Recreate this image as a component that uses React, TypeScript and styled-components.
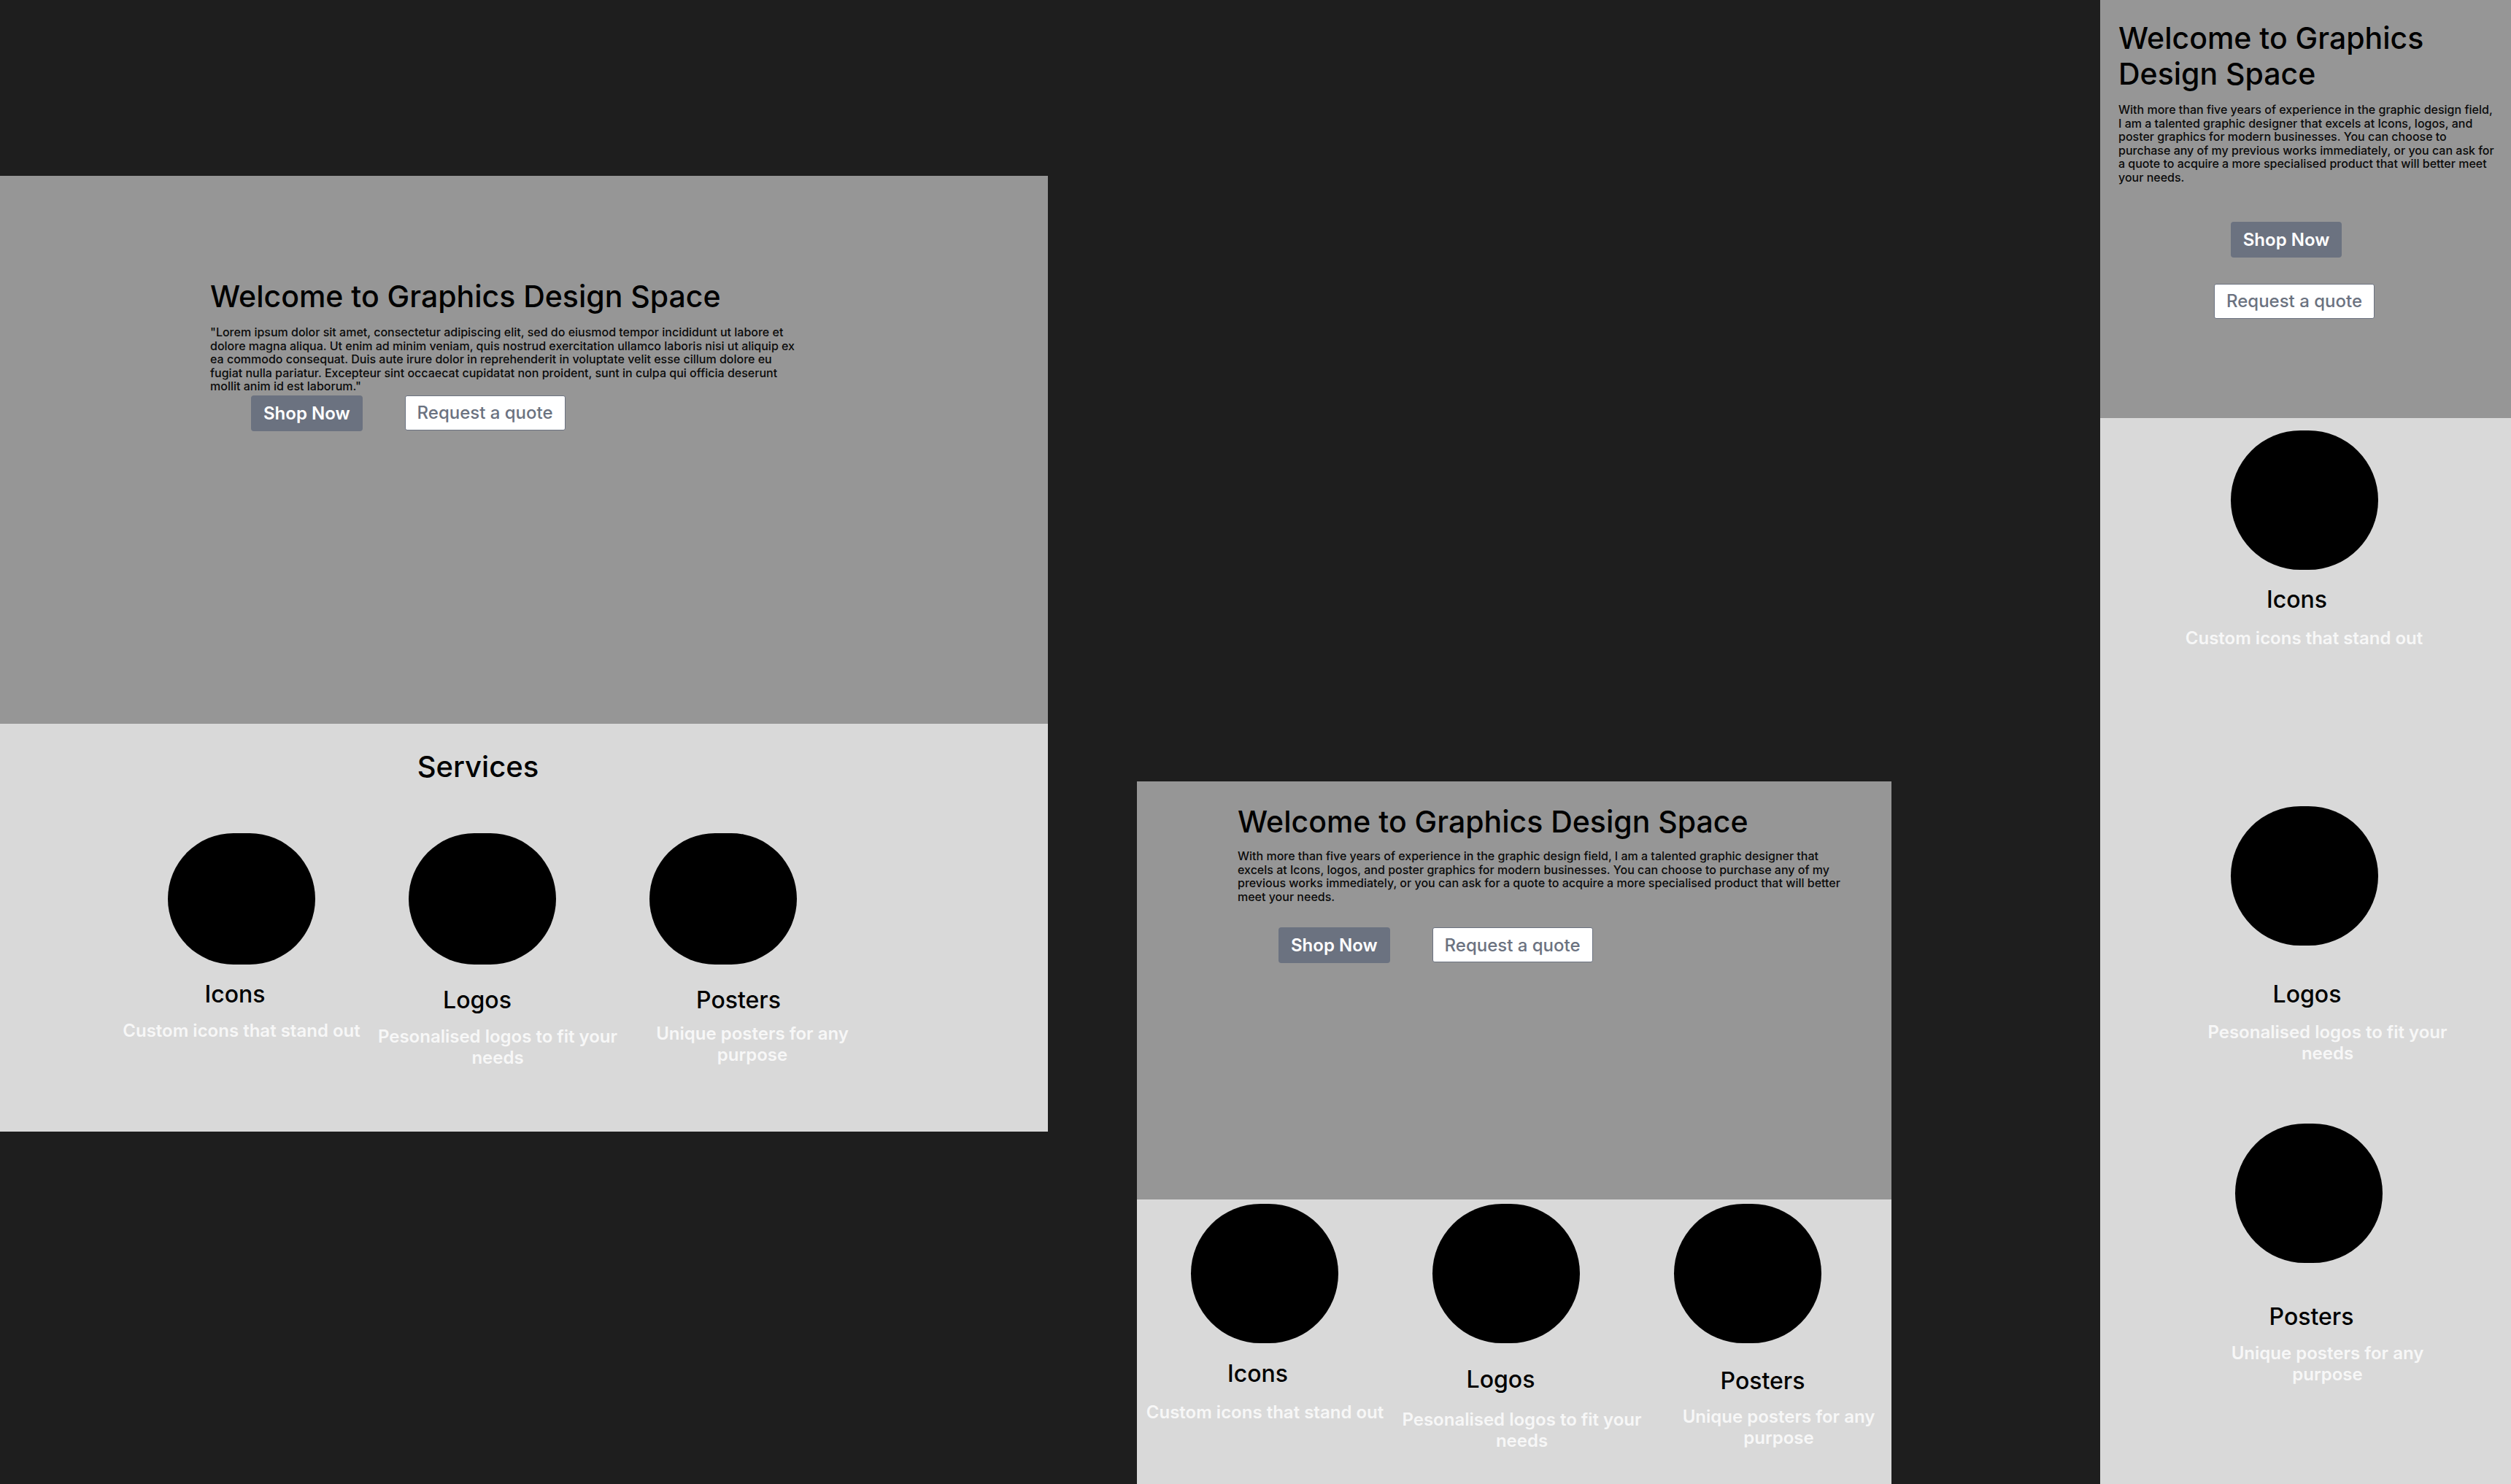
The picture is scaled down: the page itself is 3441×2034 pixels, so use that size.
import React from "react";
import styled, { createGlobalStyle } from "styled-components";

const GlobalStyle = createGlobalStyle`
  html, body {
    margin: 0;
    padding: 0;
    background: #1e1e1e;
  }
  body {
    font-family: Inter, "Noto Sans", sans-serif;
    overflow: hidden;
  }
`;

const shift = (dx?: number) =>
  !dx ? "" : dx > 0 ? `margin-left: ${2 * dx}px;` : `margin-right: ${-2 * dx}px;`;

const Canvas = styled.main`
  position: relative;
  width: 3441px;
  height: 2034px;
  overflow: hidden;
  background: #1e1e1e;
`;

const Frame = styled.section<{ $x: number; $y: number; $w: number; $h: number }>`
  position: absolute;
  left: ${(p) => p.$x}px;
  top: ${(p) => p.$y}px;
  width: ${(p) => p.$w}px;
  height: ${(p) => p.$h}px;
  display: flex;
  flex-direction: column;
  overflow: hidden;
  background: #d9d9d9;
`;

const Hero = styled.header<{ $h: number; $pt: number; $pl: number; $pr?: number }>`
  flex: 0 0 ${(p) => p.$h}px;
  box-sizing: border-box;
  background: #969696;
  padding: ${(p) => p.$pt}px ${(p) => p.$pr ?? 0}px 0 ${(p) => p.$pl}px;
  display: flex;
  flex-direction: column;
  align-items: flex-start;
`;

const Title = styled.h1`
  margin: 0;
  font-family: Inter, sans-serif;
  font-size: 41px;
  line-height: 49px;
  font-weight: 500;
  color: #000;
`;

const Lead = styled.p<{ $mt: number; $w?: number }>`
  margin: ${(p) => p.$mt}px 0 0;
  ${(p) => (p.$w ? `width: ${p.$w}px;` : "")}
  font-family: Inter, sans-serif;
  font-size: 16px;
  line-height: 18.6px;
  font-weight: 500;
  color: #0a0a0a;
`;

const ButtonRow = styled.div<{ $mt: number }>`
  display: flex;
  gap: 58px;
  padding-left: 56px;
  margin-top: ${(p) => p.$mt}px;
`;

const ButtonStack = styled.div<{ $mt: number }>`
  align-self: stretch;
  display: flex;
  flex-direction: column;
  align-items: center;
  gap: 36px;
  margin-top: ${(p) => p.$mt}px;
`;

const PrimaryButton = styled.button<{ $dx?: number }>`
  height: 49px;
  padding: 0 17px;
  border: none;
  border-radius: 4px;
  background: #6b7280;
  color: #fff;
  font-family: Inter, sans-serif;
  font-size: 24px;
  font-weight: 600;
  white-space: nowrap;
  ${(p) => shift(p.$dx)}
`;

const GhostButton = styled.button<{ $dx?: number }>`
  height: 48px;
  padding: 0 16px;
  border: 1px solid #6b7280;
  border-radius: 3px;
  background: #fff;
  color: #6b7280;
  font-family: Inter, sans-serif;
  font-size: 24px;
  font-weight: 500;
  white-space: nowrap;
  ${(p) => shift(p.$dx)}
`;

const Services = styled.section<{ $pt: number; $pl?: number }>`
  flex: 1;
  background: #d9d9d9;
  padding: ${(p) => p.$pt}px 0 0 ${(p) => p.$pl ?? 0}px;
  display: flex;
  flex-direction: column;
  align-items: flex-start;
`;

const ServicesHeading = styled.h2`
  width: 978px;
  margin: 0;
  text-align: center;
  font-family: Inter, sans-serif;
  font-size: 40px;
  line-height: 48px;
  font-weight: 500;
  color: #000;
`;

const CardRow = styled.div<{ $mt: number }>`
  display: flex;
  margin-top: ${(p) => p.$mt}px;
`;

const CardColumn = styled.div`
  align-self: stretch;
  display: flex;
  flex-direction: column;
  align-items: center;
`;

const Card = styled.article<{ $w?: number; $mt?: number }>`
  ${(p) => (p.$w ? `width: ${p.$w}px;` : "align-self: stretch;")}
  margin-top: ${(p) => p.$mt ?? 0}px;
  display: flex;
  flex-direction: column;
  align-items: center;
`;

const Blob = styled.div<{ $h: number; $dx?: number }>`
  flex-shrink: 0;
  width: 202px;
  height: ${(p) => p.$h}px;
  border-radius: 101px;
  background: #000;
  ${(p) => shift(p.$dx)}
`;

const CardTitle = styled.h3<{ $mt: number; $dx?: number }>`
  margin: ${(p) => p.$mt}px 0 0;
  font-family: Inter, sans-serif;
  font-size: 32px;
  line-height: 38px;
  font-weight: 500;
  color: #000;
  white-space: nowrap;
  ${(p) => shift(p.$dx)}
`;

const CardText = styled.p<{ $mt: number; $dx?: number }>`
  flex-shrink: 0;
  width: 340px;
  margin: ${(p) => p.$mt}px 0 0;
  text-align: center;
  font-family: Inter, sans-serif;
  font-size: 24px;
  line-height: 29px;
  font-weight: 600;
  color: #f7f7f7;
  ${(p) => shift(p.$dx)}
`;

type CardSpec = {
  title: string;
  desc: string;
  bdx?: number;
  tdx: number;
  tmt: number;
  ddx: number;
  dmt: number;
  cmt?: number;
};

const LOREM =
  '"Lorem ipsum dolor sit amet, consectetur adipiscing elit, sed do eiusmod tempor incididunt ut labore et dolore magna aliqua. Ut enim ad minim veniam, quis nostrud exercitation ullamco laboris nisi ut aliquip ex ea commodo consequat. Duis aute irure dolor in reprehenderit in voluptate velit esse cillum dolore eu fugiat nulla pariatur. Excepteur sint occaecat cupidatat non proident, sunt in culpa qui officia deserunt mollit anim id est laborum."';

const ABOUT =
  "With more than five years of experience in the graphic design field, I am a talented graphic designer that excels at Icons, logos, and poster graphics for modern businesses. You can choose to purchase any of my previous works immediately, or you can ask for a quote to acquire a more specialised product that will better meet your needs.";

const TITLES = ["Icons", "Logos", "Posters"];
const DESCS = [
  "Custom icons that stand out",
  "Pesonalised logos to fit your needs",
  "Unique posters for any purpose",
];

const desktopCards: CardSpec[] = [
  { title: TITLES[0], desc: DESCS[0], tdx: -9, tmt: 22, ddx: 0, dmt: 16 },
  { title: TITLES[1], desc: DESCS[1], tdx: -7, tmt: 30, ddx: 21, dmt: 16 },
  { title: TITLES[2], desc: DESCS[2], tdx: 21, tmt: 30, ddx: 40, dmt: 12 },
];

const tabletCards: CardSpec[] = [
  { title: TITLES[0], desc: DESCS[0], tdx: -9, tmt: 23, ddx: 1, dmt: 19 },
  { title: TITLES[1], desc: DESCS[1], tdx: -7, tmt: 31, ddx: 22, dmt: 21 },
  { title: TITLES[2], desc: DESCS[2], tdx: 21, tmt: 33, ddx: 43, dmt: 15 },
];

const mobileCards: CardSpec[] = [
  { title: TITLES[0], desc: DESCS[0], bdx: -2, tdx: -12, tmt: 22, ddx: -2, dmt: 19, cmt: 17 },
  { title: TITLES[1], desc: DESCS[1], bdx: -2, tdx: 2, tmt: 48, ddx: 30, dmt: 18, cmt: 216 },
  { title: TITLES[2], desc: DESCS[2], bdx: 4, tdx: 8, tmt: 55, ddx: 30, dmt: 16, cmt: 82 },
];

const ServiceCard: React.FC<{ spec: CardSpec; blobH: number; width?: number }> = ({
  spec,
  blobH,
  width,
}) => (
  <Card $w={width} $mt={spec.cmt}>
    <Blob $h={blobH} $dx={spec.bdx} />
    <CardTitle $mt={spec.tmt} $dx={spec.tdx}>
      {spec.title}
    </CardTitle>
    <CardText $mt={spec.dmt} $dx={spec.ddx}>
      {spec.desc}
    </CardText>
  </Card>
);

export default function App() {
  return (
    <>
      <GlobalStyle />
      <Canvas>
        {/* Desktop frame */}
        <Frame $x={0} $y={241} $w={1436} $h={1310}>
          <Hero $h={751} $pt={141} $pl={288}>
            <Title>Welcome to Graphics Design Space</Title>
            <Lead $mt={15} $w={815}>
              {LOREM}
            </Lead>
            <ButtonRow $mt={3}>
              <PrimaryButton>Shop Now</PrimaryButton>
              <GhostButton>Request a quote</GhostButton>
            </ButtonRow>
          </Hero>
          <Services $pt={35} $pl={166}>
            <ServicesHeading>Services</ServicesHeading>
            <CardRow $mt={67}>
              {desktopCards.map((c) => (
                <ServiceCard key={c.title} spec={c} blobH={180} width={330} />
              ))}
            </CardRow>
          </Services>
        </Frame>

        {/* Tablet frame */}
        <Frame $x={1558} $y={1071} $w={1034} $h={1000}>
          <Hero $h={573} $pt={31} $pl={138}>
            <Title>Welcome to Graphics Design Space</Title>
            <Lead $mt={13} $w={830}>
              {ABOUT}
            </Lead>
            <ButtonRow $mt={33}>
              <PrimaryButton>Shop Now</PrimaryButton>
              <GhostButton>Request a quote</GhostButton>
            </ButtonRow>
          </Hero>
          <Services $pt={6} $pl={9}>
            <CardRow $mt={0}>
              {tabletCards.map((c) => (
                <ServiceCard key={c.title} spec={c} blobH={191} width={331} />
              ))}
            </CardRow>
          </Services>
        </Frame>

        {/* Mobile frame */}
        <Frame $x={2878} $y={0} $w={563} $h={2100}>
          <Hero $h={573} $pt={28} $pl={25} $pr={22}>
            <Title>Welcome to Graphics Design Space</Title>
            <Lead $mt={15}>{ABOUT}</Lead>
            <ButtonStack $mt={51}>
              <PrimaryButton $dx={-28}>Shop Now</PrimaryButton>
              <GhostButton $dx={-17}>Request a quote</GhostButton>
            </ButtonStack>
          </Hero>
          <Services $pt={0}>
            <CardColumn>
              {mobileCards.map((c) => (
                <ServiceCard key={c.title} spec={c} blobH={191} />
              ))}
            </CardColumn>
          </Services>
        </Frame>
      </Canvas>
    </>
  );
}
